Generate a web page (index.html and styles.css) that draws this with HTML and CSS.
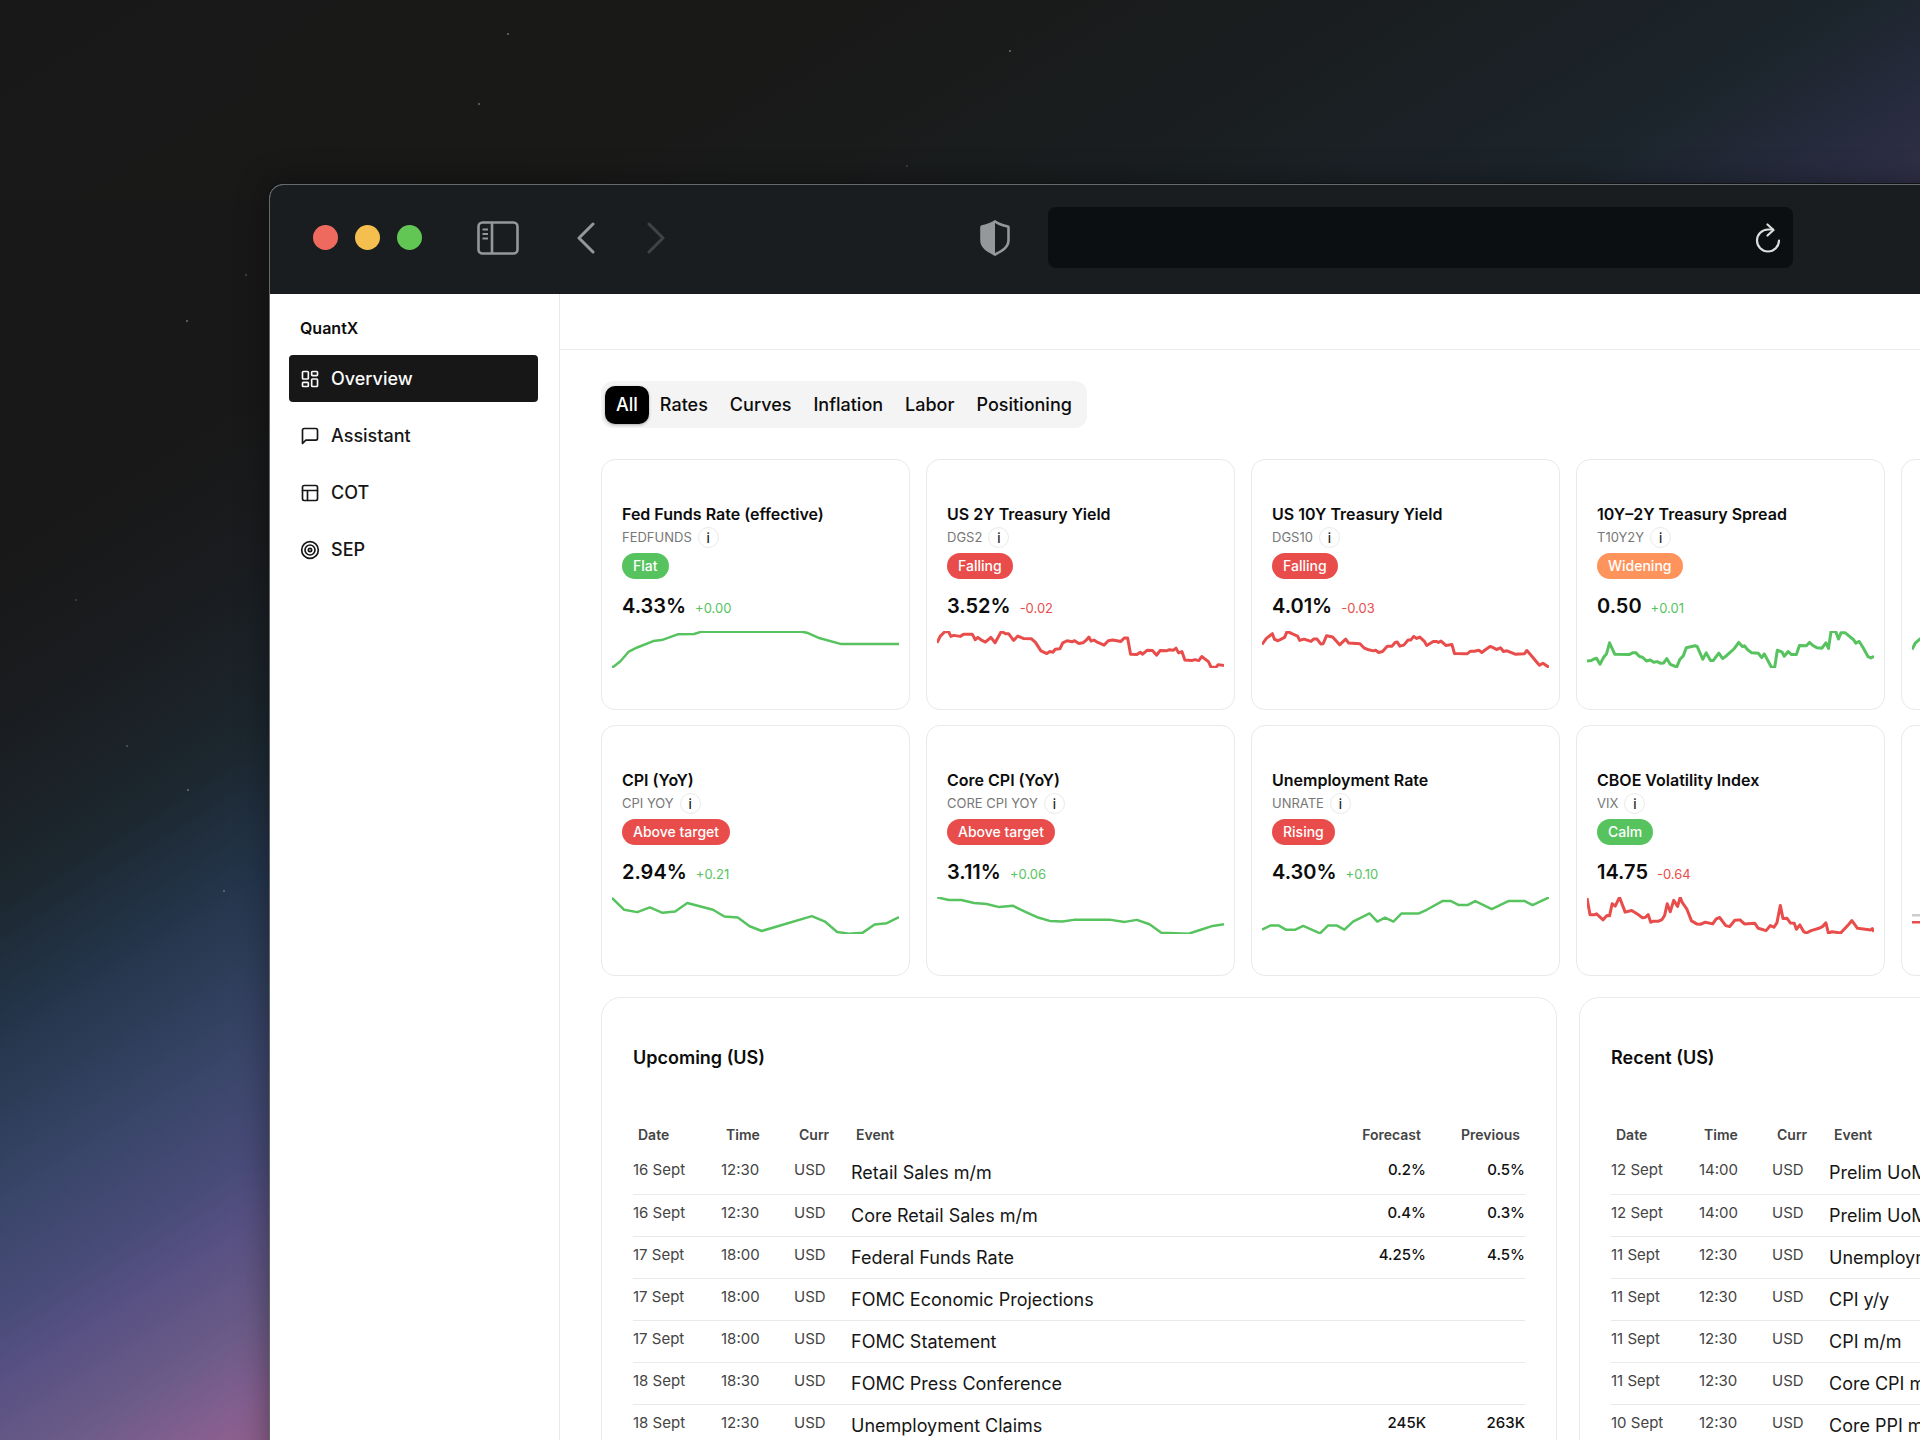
FILE: index.html
```html
<!DOCTYPE html>
<html lang="en">
<head>
  <meta charset="UTF-8">
  <title>QuantX</title>
  <meta name="viewport" content="width=device-width, initial-scale=1.0">
  <link rel="stylesheet" href="styles.css">
</head>
<body>
  <!-- Night sky -->
  <svg class="stars" width="1100" height="1000" aria-hidden="true">
    <circle cx="508" cy="34" r="1"/>
    <circle cx="479" cy="104" r="1"/>
    <circle cx="1010" cy="51" r="1"/>
    <circle cx="187" cy="321" r="1"/>
    <circle cx="246" cy="275" r="1" opacity=".6"/>
    <circle cx="76" cy="600" r="1" opacity=".5"/>
    <circle cx="127" cy="746" r="1" opacity=".7"/>
    <circle cx="188" cy="790" r="1"/>
    <circle cx="224" cy="891" r="1"/>
    <circle cx="907" cy="166" r="1" opacity=".5"/>
  </svg>

  <div class="window">
    <!-- Browser toolbar -->
    <div class="toolbar">
      <div class="lights">
        <span class="light red"></span>
        <span class="light yellow"></span>
        <span class="light green"></span>
      </div>
      <button class="tool-btn panel-btn" aria-label="Toggle sidebar">
        <svg width="42" height="34" viewBox="0 0 42 34" fill="none" stroke="#95989a" stroke-width="2.6">
          <rect x="1.5" y="1.5" width="39" height="31" rx="4"/>
          <path d="M15 2v30"/>
          <path d="M5.500 8.500h5.500M5.500 13h5.500M5.500 17.500h5.500" stroke-width="2"/>
        </svg>
      </button>
      <button class="tool-btn back-btn" aria-label="Back">
        <svg width="18" height="32" viewBox="0 0 18 32" fill="none" stroke="#95989a" stroke-width="3" stroke-linecap="round" stroke-linejoin="round"><path d="M16 2 2 16l14 14"/></svg>
      </button>
      <button class="tool-btn forward-btn" aria-label="Forward">
        <svg width="18" height="32" viewBox="0 0 18 32" fill="none" stroke="#3f4346" stroke-width="3" stroke-linecap="round" stroke-linejoin="round"><path d="m2 2 14 14L2 30"/></svg>
      </button>
      <button class="tool-btn shield-btn" aria-label="Privacy report">
        <svg width="30" height="36" viewBox="0 0 30 36">
          <path d="M15 1.500C11 4.500 6.500 5.500 2 6.500c-.5 0-.5.500-.5 1V20c0 7 5.500 10.500 13.500 14.500C23 30.500 28.500 27 28.500 20V7.500c0-.5 0-1-.5-1C23.500 5.500 19 4.500 15 1.500z" fill="none" stroke="#95989a" stroke-width="2.600"/>
          <path d="M15 1.500C11 4.500 6.500 5.500 2 6.500c-.5 0-.5.500-.5 1V20c0 7 5.500 10.500 13.500 14.500z" fill="#95989a"/>
        </svg>
      </button>
      <div class="address">
        <input type="text" aria-label="Address">
        <button class="tool-btn" aria-label="Reload">
          <svg width="26" height="30" viewBox="0 0 26 30" fill="none" stroke="#dcdddd" stroke-width="2.200" stroke-linecap="round" stroke-linejoin="round">
            <path d="M24 17.500A11 11 0 1 1 13 6.500h5"/>
            <path d="m12.500 1.500 6 5.500-6 5.500"/>
          </svg>
        </button>
      </div>
    </div>

    <div class="app">
      <!-- Sidebar -->
      <aside class="sidebar">
        <div class="brand">QuantX</div>
        <nav>
          <a href="#overview" class="nav-item active">
            <svg class="icon" viewBox="0 0 24 24"><rect x="3" y="3" width="7" height="9" rx="1"/><rect x="14" y="3" width="7" height="5" rx="1"/><rect x="14" y="12" width="7" height="9" rx="1"/><rect x="3" y="16" width="7" height="5" rx="1"/></svg>
            Overview
          </a>
          <a href="#assistant" class="nav-item">
            <svg class="icon" viewBox="0 0 24 24"><path d="M21 15a2 2 0 0 1-2 2H7l-4 4V5a2 2 0 0 1 2-2h14a2 2 0 0 1 2 2z"/></svg>
            Assistant
          </a>
          <a href="#cot" class="nav-item">
            <svg class="icon" viewBox="0 0 24 24"><rect x="3" y="3" width="18" height="18" rx="2"/><path d="M3 9h18M9 21V9"/></svg>
            COT
          </a>
          <a href="#sep" class="nav-item">
            <svg class="icon" viewBox="0 0 24 24"><circle cx="12" cy="12" r="10"/><circle cx="12" cy="12" r="6"/><circle cx="12" cy="12" r="2"/></svg>
            SEP
          </a>
        </nav>
      </aside>

      <main class="main">
        <header class="topbar"></header>
        <div class="content">
          <div class="tabs">
            <button class="tab active">All</button>
            <button class="tab">Rates</button>
            <button class="tab">Curves</button>
            <button class="tab">Inflation</button>
            <button class="tab">Labor</button>
            <button class="tab">Positioning</button>
          </div>

          <!-- Indicator cards -->
          <section class="cards">
            <article class="card">
              <h3>Fed Funds Rate (effective)</h3>
              <div class="series">FEDFUNDS <button class="info" aria-label="About FEDFUNDS">i</button></div>
              <span class="badge good">Flat</span>
              <div class="reading"><span class="value">4.33%</span><span class="change up">+0.00</span></div>
              <svg class="spark up" viewBox="0 0 682 110" preserveAspectRatio="none"><polyline points="0,108 5,105 20,90 40,61 60,49 98,30 118,27 156,10 195,9 213,2 450,2 463,5 490,20 545,39 682,39"/></svg>
            </article>
            <article class="card">
              <h3>US 2Y Treasury Yield</h3>
              <div class="series">DGS2 <button class="info" aria-label="About DGS2">i</button></div>
              <span class="badge bad">Falling</span>
              <div class="reading"><span class="value">3.52%</span><span class="change down">-0.02</span></div>
              <svg class="spark down dense" viewBox="0 0 682 110" preserveAspectRatio="none"><polyline points="0,35 8,15 18,3 27,1 33,16 40,13 55,16 63,10 84,10 91,26 97,19 107,28 115,33 128,19 138,35 153,1 163,8 170,8 182,28 192,15 205,22 224,23 234,34 247,59 261,67 268,61 276,63 281,54 292,53 299,35 309,29 321,32 327,29 337,37 347,35 354,28 361,18 366,30 373,27 382,34 397,42 407,29 418,27 437,31 445,21 453,21 460,69 475,70 483,63 488,69 500,57 512,58 522,72 530,58 545,59 551,56 562,57 568,51 574,65 582,61 589,86 605,88 613,85 622,88 629,76 645,91 651,107 663,108 668,100 682,103"/></svg>
            </article>
            <article class="card">
              <h3>US 10Y Treasury Yield</h3>
              <div class="series">DGS10 <button class="info" aria-label="About DGS10">i</button></div>
              <span class="badge bad">Falling</span>
              <div class="reading"><span class="value">4.01%</span><span class="change down">-0.03</span></div>
              <svg class="spark down dense" viewBox="0 0 662 110" preserveAspectRatio="none"><polyline points="0,40 10,22 24,8 29,25 37,29 52,19 58,1 69,8 82,15 87,28 97,24 113,31 119,24 127,24 136,39 141,38 149,14 163,18 179,41 193,24 200,36 226,38 235,50 246,56 257,59 262,57 269,64 278,61 289,45 300,45 307,34 312,33 318,45 327,42 337,27 343,27 350,16 357,22 364,18 374,30 380,43 395,31 402,31 407,34 413,30 424,43 438,40 444,67 473,68 481,60 490,60 500,57 507,64 516,55 526,46 531,48 541,55 550,50 557,61 565,59 584,69 605,68 611,58 621,73 632,90 640,102 648,96 662,108"/></svg>
            </article>
            <article class="card">
              <h3>10Y–2Y Treasury Spread</h3>
              <div class="series">T10Y2Y <button class="info" aria-label="About T10Y2Y">i</button></div>
              <span class="badge warn">Widening</span>
              <div class="reading"><span class="value">0.50</span><span class="change up">+0.01</span></div>
              <svg class="spark up dense" viewBox="0 0 662 110" preserveAspectRatio="none"><polyline points="0,89 10,88 15,84 22,81 30,99 38,79 45,68 52,35 64,69 97,70 105,65 113,65 121,76 128,78 137,89 146,86 154,93 162,91 170,96 177,95 184,82 192,99 207,107 214,85 222,74 229,50 249,44 254,46 267,84 275,65 285,88 291,88 304,66 313,82 323,72 340,52 350,34 359,47 363,44 370,55 380,65 395,66 403,79 409,68 425,107 433,108 439,57 450,63 455,75 464,61 472,70 483,70 490,43 506,44 513,34 521,43 531,50 542,51 551,35 557,52 563,1 574,2 580,24 586,5 595,5 615,26 620,36 628,31 637,50 648,76 655,80 662,75"/></svg>
            </article>
            <article class="card">
              <svg class="spark up dense" viewBox="0 0 662 110" preserveAspectRatio="none"><polyline points="0,55 8,35 18,24 30,20 60,30 120,50 240,40 400,70 662,60"/></svg>
            </article>
            <article class="card"></article>

            <article class="card">
              <h3>CPI (YoY)</h3>
              <div class="series">CPI YOY <button class="info" aria-label="About CPI YOY">i</button></div>
              <span class="badge bad">Above target</span>
              <div class="reading"><span class="value">2.94%</span><span class="change up">+0.21</span></div>
              <svg class="spark up" viewBox="0 0 682 110" preserveAspectRatio="none"><polyline points="0,3 29,38 60,45 90,31 120,47 150,43 179,18 240,38 267,58 299,61 327,87 356,101 475,57 506,73 535,104 563,109 596,106 624,82 653,78 682,60"/></svg>
            </article>
            <article class="card">
              <h3>Core CPI (YoY)</h3>
              <div class="series">CORE CPI YOY <button class="info" aria-label="About CORE CPI YOY">i</button></div>
              <span class="badge bad">Above target</span>
              <div class="reading"><span class="value">3.11%</span><span class="change up">+0.06</span></div>
              <svg class="spark up" viewBox="0 0 682 110" preserveAspectRatio="none"><polyline points="0,1 28,9 58,9 88,18 118,21 148,30 180,26 210,44 238,60 268,71 298,73 325,68 413,68 446,74 475,68 505,81 533,106 598,109 625,98 655,86 682,81"/></svg>
            </article>
            <article class="card">
              <h3>Unemployment Rate</h3>
              <div class="series">UNRATE <button class="info" aria-label="About UNRATE">i</button></div>
              <span class="badge bad">Rising</span>
              <div class="reading"><span class="value">4.30%</span><span class="change up">+0.10</span></div>
              <svg class="spark up" viewBox="0 0 662 110" preserveAspectRatio="none"><polyline points="0,97 19,85 39,85 55,97 77,97 95,86 134,108 152,85 173,85 190,97 210,73 248,49 266,73 284,61 303,73 322,49 362,49 380,38 416,12 436,12 454,24 474,24 492,12 530,36 568,12 606,12 624,24 662,1"/></svg>
            </article>
            <article class="card">
              <h3>CBOE Volatility Index</h3>
              <div class="series">VIX <button class="info" aria-label="About VIX">i</button></div>
              <span class="badge good">Calm</span>
              <div class="reading"><span class="value">14.75</span><span class="change down">-0.64</span></div>
              <svg class="spark down dense" viewBox="0 0 662 110" preserveAspectRatio="none"><polyline points="0,3 7,53 17,53 22,50 37,68 46,55 52,56 58,20 65,27 75,1 88,45 103,40 118,52 128,62 135,60 141,52 147,75 153,72 165,72 173,67 179,55 185,20 192,44 200,10 209,28 215,1 220,17 230,35 241,71 253,80 262,81 273,75 290,80 298,65 306,61 320,85 329,88 341,69 353,68 363,80 387,78 395,93 413,100 423,85 431,90 438,77 446,25 452,64 461,63 469,77 478,78 483,96 491,83 500,103 506,107 517,100 535,93 543,88 551,77 557,108 565,103 585,107 604,81 611,70 624,93 655,98 658,94 662,103"/></svg>
            </article>
            <article class="card">
              <svg class="spark down" viewBox="0 0 662 110" preserveAspectRatio="none"><path class="baseline" d="M0 54h662"/><polyline points="0,75 40,75 90,60 200,80 400,30 662,50"/></svg>
            </article>
            <article class="card"></article>
          </section>

          <!-- Economic calendar -->
          <section class="calendars">
            <article class="panel">
              <h2>Upcoming (US)</h2>
              <table>
                <colgroup><col class="col-date"><col class="col-time"><col class="col-curr"><col><col class="col-num"><col class="col-num"></colgroup>
                <thead>
                  <tr><th>Date</th><th>Time</th><th>Curr</th><th>Event</th><th class="num">Forecast</th><th class="num">Previous</th></tr>
                </thead>
                <tbody>
                  <tr><td>16 Sept</td><td>12:30</td><td>USD</td><td class="event">Retail Sales m/m</td><td class="num">0.2%</td><td class="num">0.5%</td></tr>
                  <tr><td>16 Sept</td><td>12:30</td><td>USD</td><td class="event">Core Retail Sales m/m</td><td class="num">0.4%</td><td class="num">0.3%</td></tr>
                  <tr><td>17 Sept</td><td>18:00</td><td>USD</td><td class="event">Federal Funds Rate</td><td class="num">4.25%</td><td class="num">4.5%</td></tr>
                  <tr><td>17 Sept</td><td>18:00</td><td>USD</td><td class="event">FOMC Economic Projections</td><td></td><td></td></tr>
                  <tr><td>17 Sept</td><td>18:00</td><td>USD</td><td class="event">FOMC Statement</td><td></td><td></td></tr>
                  <tr><td>18 Sept</td><td>18:30</td><td>USD</td><td class="event">FOMC Press Conference</td><td></td><td></td></tr>
                  <tr><td>18 Sept</td><td>12:30</td><td>USD</td><td class="event">Unemployment Claims</td><td class="num">245K</td><td class="num">263K</td></tr>
                </tbody>
              </table>
            </article>
            <article class="panel">
              <h2>Recent (US)</h2>
              <table>
                <colgroup><col class="col-date"><col class="col-time"><col class="col-curr"><col></colgroup>
                <thead>
                  <tr><th>Date</th><th>Time</th><th>Curr</th><th>Event</th></tr>
                </thead>
                <tbody>
                  <tr><td>12 Sept</td><td>14:00</td><td>USD</td><td class="event">Prelim UoM Consumer Sentiment</td></tr>
                  <tr><td>12 Sept</td><td>14:00</td><td>USD</td><td class="event">Prelim UoM Inflation Expectations</td></tr>
                  <tr><td>11 Sept</td><td>12:30</td><td>USD</td><td class="event">Unemployment Claims</td></tr>
                  <tr><td>11 Sept</td><td>12:30</td><td>USD</td><td class="event">CPI y/y</td></tr>
                  <tr><td>11 Sept</td><td>12:30</td><td>USD</td><td class="event">CPI m/m</td></tr>
                  <tr><td>11 Sept</td><td>12:30</td><td>USD</td><td class="event">Core CPI m/m</td></tr>
                  <tr><td>10 Sept</td><td>12:30</td><td>USD</td><td class="event">Core PPI m/m</td></tr>
                </tbody>
              </table>
            </article>
          </section>
        </div>
      </main>
    </div>
  </div>
</body>
</html>
```

FILE: styles.css
```css
/* Base Styles */
:root {
  --green: #57c35f;
  --red: #e84d4b;
  --orange: #ff935c;
  --border: #e8e9e9;
  --chrome: #191d1f;
}

* {
  box-sizing: border-box;
}

body, html {
  margin: 0;
  padding: 0;
  height: 100%;
  overflow: hidden;
  font-family: Inter, "Liberation Sans", sans-serif;
  color: #0c0c0c;
}

body {
  background:
    linear-gradient(148deg, #181818 0%, #191918 38%, #1a1e20 63%, #1c252c 83%, #262b3d 92%, #33304a 100%) top / 100% 200px no-repeat,
    linear-gradient(148deg, #181818 0%, #181818 21%, #1a1c1f 27%, #1c272f 34%, #24354b 39%, #2d3d58 42%, #3b466b 46%, #494c79 50%, #565082 52%, #6a5b88 56%, #845f90 59%, #98628a 62%);
}

button {
  font-family: inherit;
  border: none;
  padding: 0;
  background: none;
  color: inherit;
  cursor: pointer;
}

.stars {
  position: absolute;
  top: 0;
  left: 0;
  fill: #6d7072;
}

/* Browser Window */
.window {
  position: relative;
  width: calc(100% + 388px);
  margin: 184px 0 0 269px;
  border: 1px solid #66696a;
  border-radius: 14px 14px 0 0;
  background: #fff;
  box-shadow: 0 -1px 0 #101214, 0 0 32px rgba(0, 0, 0, 0.4);
  overflow: hidden;
}

.toolbar {
  display: flex;
  align-items: center;
  height: 109px;
  padding: 0 43px 4px;
  background: var(--chrome);
}

.lights {
  display: flex;
  gap: 17px;
}

.light {
  width: 25px;
  height: 25px;
  border-radius: 50%;
}

.light.red { background: #ee6a5f; }
.light.yellow { background: #f5bf4f; }
.light.green { background: #62c655; }

.tool-btn {
  display: flex;
}

.panel-btn { margin-left: 55px; }
.back-btn { margin-left: 58px; }
.forward-btn { margin-left: 52px; }
.shield-btn { margin-left: 315px; }

.address {
  display: flex;
  align-items: center;
  width: 745px;
  height: 61px;
  margin-left: 38px;
  padding-right: 12px;
  border-radius: 8px;
  background: #0b0f11;
}

.address input {
  flex: 1;
  border: none;
  outline: none;
  background: none;
  color: #ddd;
  font-size: 18px;
}

/* App Layout */
.app {
  display: flex;
}

.sidebar {
  flex: none;
  width: 290px;
  padding: 24px 21px 24px 19px;
  border-right: 1px solid var(--border);
}

.brand {
  padding-left: 11px;
  margin-bottom: 17px;
  font-size: 16px;
  font-weight: 600;
  line-height: 20px;
}

.nav-item {
  display: flex;
  align-items: center;
  gap: 11px;
  height: 47px;
  margin-bottom: 10px;
  padding-left: 11px;
  border-radius: 4px;
  color: #161616;
  font-size: 18px;
  font-weight: 500;
  text-decoration: none;
}

.nav-item.active {
  background: #171717;
  color: #fafafa;
}

.icon {
  width: 20px;
  height: 20px;
  fill: none;
  stroke: currentColor;
  stroke-width: 2;
  stroke-linecap: round;
  stroke-linejoin: round;
}

.main {
  flex: 1;
  min-width: 0;
}

.topbar {
  height: 56px;
  border-bottom: 1px solid var(--border);
}

.content {
  padding: 31px 41px;
}

/* Tabs */
.tabs {
  display: inline-flex;
  align-items: center;
  height: 47px;
  padding: 4px;
  margin-bottom: 31px;
  border-radius: 12px;
  background: #f4f4f4;
}

.tab {
  height: 38px;
  padding: 0 11px;
  border-radius: 10px;
  font-size: 18px;
  font-weight: 500;
}

.tab.active {
  background: #000;
  color: #fff;
  box-shadow: 0 1px 3px rgba(0, 0, 0, 0.3);
}

/* Indicator Cards */
.cards {
  display: grid;
  grid-template-columns: repeat(6, 1fr);
  gap: 15px 16px;
  margin-bottom: 21px;
}

.card {
  display: flex;
  flex-direction: column;
  align-items: flex-start;
  padding: 44px 20px 41px;
  border: 1px solid var(--border);
  border-radius: 14px;
}

.card h3 {
  margin: 0 0 3px;
  font-size: 16px;
  font-weight: 600;
  line-height: 20px;
}

.series {
  display: flex;
  align-items: center;
  gap: 6px;
  color: #777;
  font-size: 13px;
  line-height: 21px;
}

.info {
  width: 21px;
  height: 21px;
  border: 1px solid var(--border);
  border-radius: 50%;
  color: #222;
  font-size: 13px;
  font-weight: 500;
  line-height: 18px;
}

.badge {
  height: 26px;
  margin: 5px 0 13px;
  padding: 0 11px;
  border-radius: 13px;
  color: #fff;
  font-size: 14px;
  font-weight: 500;
  line-height: 25px;
}

.badge.good { background: var(--green); }
.badge.bad { background: var(--red); }
.badge.warn { background: var(--orange); }

.reading {
  display: flex;
  align-items: baseline;
  gap: 9px;
  line-height: 28px;
}

.value {
  font-size: 20px;
  font-weight: 600;
}

.change {
  font-size: 13px;
}

.change.up { color: var(--green); }
.change.down { color: var(--red); }

.spark {
  align-self: stretch;
  width: auto;
  height: 37px;
  margin: auto -10px 0;
  fill: none;
  stroke-width: 2.5;
  stroke-linejoin: round;
}

.reading + .spark {
  margin-top: 9px;
}

.spark.up { stroke: var(--green); }
.spark.down { stroke: var(--red); }
.spark.dense { stroke-width: 3; }
.spark * { vector-effect: non-scaling-stroke; }
.spark .baseline { stroke: #ccc; }

/* Calendar Panels */
.calendars {
  display: grid;
  grid-template-columns: 1fr 1fr;
  gap: 22px;
}

.panel {
  padding: 48px 31px;
  border: 1px solid var(--border);
  border-radius: 20px;
}

.panel h2 {
  margin: 0 0 46px;
  font-size: 18px;
  font-weight: 600;
  line-height: 24px;
}

table {
  width: 100%;
  border-collapse: collapse;
  table-layout: fixed;
}

.col-date { width: 88px; }
.col-time { width: 73px; }
.col-curr { width: 57px; }
.col-num { width: 99px; }

th {
  height: 36px;
  padding: 0 5px;
  color: #444;
  font-size: 14px;
  font-weight: 600;
  text-align: left;
}

td {
  height: 42px;
  padding: 8px 0 0;
  color: #444;
  font-size: 15px;
  line-height: 20px;
  vertical-align: top;
}

tbody tr + tr td {
  border-top: 1px solid var(--border);
}

.event {
  padding-top: 9px;
  color: #161616;
  font-size: 18px;
  line-height: 24px;
}

th.num,
td.num {
  text-align: right;
}

td.num {
  color: #111;
  font-weight: 500;
}
```
